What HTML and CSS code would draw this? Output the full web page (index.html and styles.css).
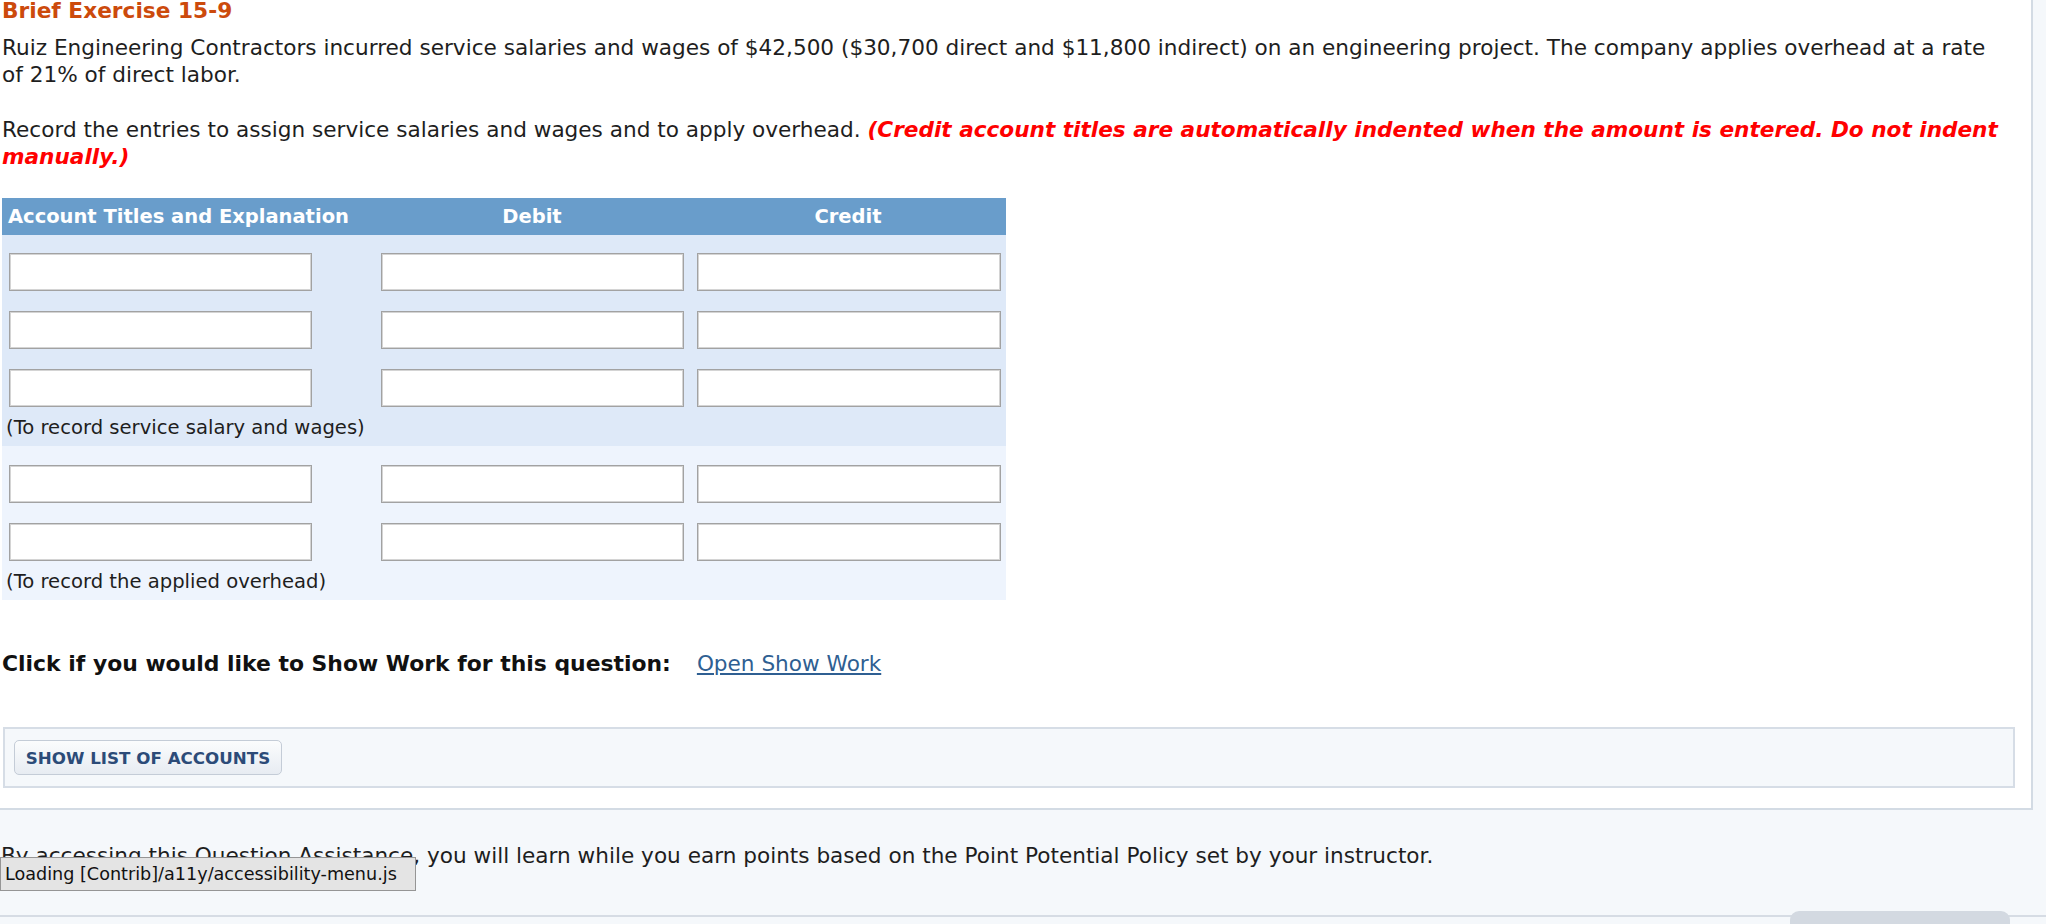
FILE: index.html
```html
<!DOCTYPE html>
<html lang="en">
<head>
<meta charset="utf-8">
<title>Brief Exercise 15-9</title>
<link rel="stylesheet" href="styles.css">
</head>
<body>
<div class="page">
  <div class="sheet">
    <h1 class="title">Brief Exercise 15-9</h1>
    <p class="para para-first">Ruiz Engineering Contractors incurred service salaries and wages of $42,500 ($30,700 direct and $11,800 indirect) on an engineering project. The company applies overhead at a rate of 21% of direct labor.</p>
    <p class="para para-gap">Record the entries to assign service salaries and wages and to apply overhead. <span class="warn">(Credit account titles are automatically indented when the amount is entered. Do not indent manually.)</span></p>

    <div class="journal">
      <div class="jhead">
        <div class="jh jh-left">Account Titles and Explanation</div>
        <div class="jh">Debit</div>
        <div class="jh">Credit</div>
      </div>
      <div class="jgroup jgroup-a">
        <input class="cell cell-acct" type="text"><input class="cell cell-amt" type="text"><input class="cell cell-amt cell-last" type="text">
        <input class="cell cell-acct" type="text"><input class="cell cell-amt" type="text"><input class="cell cell-amt cell-last" type="text">
        <input class="cell cell-acct" type="text"><input class="cell cell-amt" type="text"><input class="cell cell-amt cell-last" type="text">
        <div class="jnote">(To record service salary and wages)</div>
      </div>
      <div class="jgroup jgroup-b">
        <input class="cell cell-acct" type="text"><input class="cell cell-amt" type="text"><input class="cell cell-amt cell-last" type="text">
        <input class="cell cell-acct" type="text"><input class="cell cell-amt" type="text"><input class="cell cell-amt cell-last" type="text">
        <div class="jnote">(To record the applied overhead)</div>
      </div>
    </div>

    <p class="showwork"><b>Click if you would like to Show Work for this question:</b><a class="swlink" href="#">Open Show Work</a></p>

    <div class="panel">
      <button class="btn" type="button">SHOW LIST OF ACCOUNTS</button>
    </div>
  </div>

  <p class="assist">By accessing this Question Assistance, you will learn while you earn points based on the Point Potential Policy set by your instructor.</p>

  <div class="footer"><div class="tab"></div></div>

  <div class="loading">Loading [Contrib]/a11y/accessibility-menu.js</div>
</div>
</body>
</html>
```

FILE: styles.css
```css
html, body {
  margin: 0;
  padding: 0;
  background: #f5f8fb;
}

body {
  font-family: "DejaVu Sans", Verdana, sans-serif;
  color: #1e1e1e;
  font-size: 21.6px;
  width: 2046px;
  height: 924px;
  overflow: hidden;
}

.page {
  position: relative;
  height: 924px;
}

.sheet {
  box-sizing: border-box;
  width: 2033px;
  background: #ffffff;
  border-right: 2px solid #d3dbe4;
  border-bottom: 2px solid #d3dbe4;
  padding: 0 16px 20px 2px;
}

.title {
  margin: 0;
  font-size: 21.7px;
  line-height: 22px;
  font-weight: bold;
  color: #cc4a0c;
}

.para {
  margin: 12px 0 0 0;
  line-height: 27px;
  font-size: 21.6px;
}

.para-first {
  max-width: 2000px;
}

.para-gap {
  margin-top: 28px;
}

.warn {
  color: #ff0000;
  font-weight: bold;
  font-style: italic;
}

.journal {
  width: 1004px;
  margin-top: 28px;
  font-size: 19.5px;
}

.jhead {
  display: grid;
  grid-template-columns: 372px 316px 316px;
  height: 37px;
  align-items: center;
  background: #699dcb;
  color: #ffffff;
  font-weight: bold;
}

.jh {
  text-align: center;
}

.jh-left {
  text-align: left;
  padding-left: 6px;
}

.jgroup {
  display: grid;
  grid-template-columns: 372px 316px 316px;
  row-gap: 20px;
  padding: 18px 0 6px 0;
}

.jgroup-a {
  background: #dee9f8;
}

.jgroup-b {
  background: #eef4fd;
  padding-top: 19px;
}

.cell {
  box-sizing: border-box;
  height: 38px;
  margin: 0 0 0 7px;
  width: 303px;
  background: #ffffff;
  border: 1px solid #a2a2a2;
  box-shadow: inset 0 0 0 1px #d4d4d4;
  border-radius: 0;
  padding: 0 6px;
  font: inherit;
}

.cell-last {
  width: 304px;
}

.jnote {
  grid-column: 1 / 4;
  margin-top: -11px;
  padding-left: 4px;
  line-height: 24px;
  font-size: 19.6px;
  color: #1e1e1e;
}

.showwork {
  margin: 50px 0 0 0;
  line-height: 27px;
  font-size: 21.9px;
  color: #111111;
}

.showwork b {
  font-weight: bold;
}

.swlink {
  margin-left: 26px;
  color: #2f5f92;
  text-decoration: underline;
  font-size: 21.6px;
}

.panel {
  box-sizing: border-box;
  margin: 50px 0 0 1px;
  height: 61px;
  background: #f5f8fb;
  border: 2px solid #d6dde6;
  padding: 11px 0 0 9px;
}

.btn {
  box-sizing: border-box;
  height: 35px;
  width: 268px;
  padding: 0;
  border: 1px solid #c4ccd7;
  border-radius: 5px;
  background: linear-gradient(#fbfcfd, #e7ecf2);
  color: #2c4b78;
  font-family: "DejaVu Sans", Verdana, sans-serif;
  font-weight: bold;
  font-size: 16.7px;
}

.assist {
  margin: 32px 0 0 0;
  padding-left: 1px;
  line-height: 27px;
  font-size: 21.6px;
  color: #1e1e1e;
}

.footer {
  margin-top: 46px;
  border-top: 2px solid #d6dce4;
  display: flex;
  justify-content: flex-end;
  padding-right: 36px;
}

.tab {
  width: 220px;
  height: 14px;
  margin-top: -6px;
  background: #d3d9e1;
  border-radius: 9px 9px 0 0;
}

.loading {
  position: absolute;
  left: 0;
  top: 857px;
  box-sizing: border-box;
  width: 416px;
  height: 34px;
  background: #e4e4e4;
  border: 1px solid #959595;
  padding: 0 0 0 4px;
  font-size: 17.6px;
  line-height: 32px;
  color: #111111;
  white-space: nowrap;
  overflow: hidden;
}
```
